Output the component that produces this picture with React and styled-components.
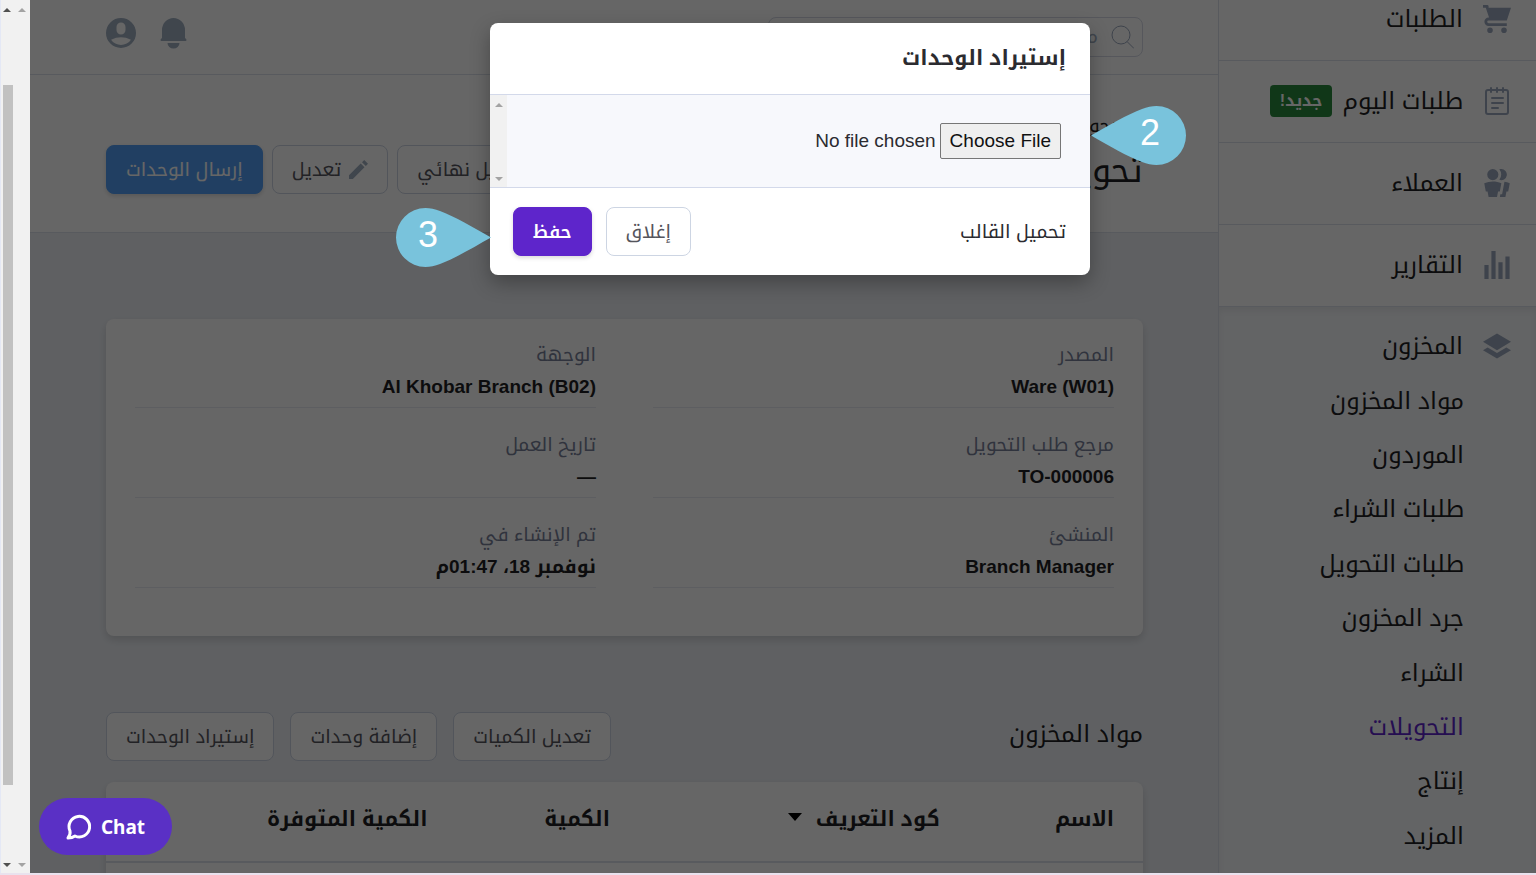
import React from "react"
import styled, { createGlobalStyle } from "styled-components"

const GlobalStyle = createGlobalStyle`
  * {
    box-sizing: border-box;
  }
  body {
    margin: 0;
    overflow: hidden;
    background: #fff;
    color: #1f1f24;
    font-family: "Liberation Sans", "Noto Kufi Arabic", "Noto Sans Arabic", "Noto Sans", "DejaVu Sans", sans-serif;
    font-size: 19px;
  }
  button, input {
    font-family: inherit;
    font-size: inherit;
  }
  a {
    color: inherit;
    text-decoration: none;
  }
`

const Shell = styled.div`
  display: flex;
  height: 100vh;
  border-bottom: 2px solid #e9e2ee;
`
const ScrollTrack = styled.div`
  flex: none;
  width: ${(p) => p.$width}px;
  display: flex;
  flex-direction: column;
  align-items: center;
  justify-content: space-between;
  background: #f1f1f1;
  padding: 8px 0 6px;
`
const PageTrack = styled(ScrollTrack)`
  border-left: 1px solid #e4e8f5;
`
const ScrollArrow = styled.span`
  width: 0;
  height: 0;
  border: 4px solid transparent;
  border-top: ${(p) => (p.$down ? `4px solid ${p.$color}` : "0")};
  border-bottom: ${(p) => (p.$down ? "0" : `4px solid ${p.$color}`)};
`
const ScrollThumb = styled.div`
  flex: 1;
  align-self: stretch;
  margin: 73px 0 78px 2px;
  background: #c1c1c1;
`
const Page = styled.div`
  position: relative;
  flex: 1;
  min-width: 0;
  display: flex;
  direction: rtl;
  overflow: hidden;
`

// sidebar
const Sidebar = styled.nav`
  flex: none;
  width: 318px;
  display: flex;
  flex-direction: column;
  margin-top: -21px;
  border-left: 1px solid #dde1ec;
  background: #fff;
  font-size: 24px;
`
const NavItem = styled.a`
  display: flex;
  align-items: center;
  gap: 20px;
  height: 82px;
  padding: 0 25px 2px;
  border-bottom: 1px solid #dde1ec;
`
const NavIcon = styled.svg`
  flex: none;
  width: 28px;
  height: 28px;
  fill: #9ba8bd;
`
const Badge = styled.span`
  margin-right: -10px;
  padding: 0 10px;
  border-radius: 4px;
  background: #288a3c;
  color: #fff;
  font-size: 16px;
  font-weight: bold;
  line-height: 32px;
`
const SubNav = styled.div`
  flex: 1;
  display: flex;
  flex-direction: column;
  padding: 12px 0 10px;
  background: #f7f9fc;
  box-shadow: inset 0 4px 6px rgba(0, 0, 0, 0.06);
`
const SubItem = styled.a`
  flex: 1;
  display: flex;
  align-items: center;
  gap: 20px;
  padding: 0 ${(p) => (p.$head ? 25 : 72)}px;
  color: ${(p) => (p.$active ? "#5e25cb" : "inherit")};
`

// main column
const Main = styled.main`
  flex: 1;
  min-width: 0;
  background: #eef1f6;
`
const TopBar = styled.header`
  display: flex;
  align-items: center;
  justify-content: space-between;
  height: 75px;
  padding: 0 75px 0 76px;
  border-bottom: 1px solid #dde1ec;
  background: #fff;
`
const SearchBox = styled.label`
  display: flex;
  align-items: center;
  gap: 10px;
  width: 375px;
  height: 40px;
  padding: 0 8px;
  border: 1px solid #d6dae6;
  border-radius: 8px;
`
const SearchInput = styled.input`
  flex: 1;
  min-width: 0;
  border: 0;
  outline: 0;
  background: none;
  &::placeholder {
    color: #a0aec0;
  }
`
const TopIcons = styled.div`
  display: flex;
  align-items: center;
  gap: 23px;
  padding-bottom: 8px;
`
const IconButton = styled.button`
  display: flex;
  padding: 0;
  border: 0;
  background: none;
`
const PageHead = styled.section`
  display: flex;
  align-items: flex-end;
  justify-content: space-between;
  height: 158px;
  padding: 0 75px 38px 76px;
  border-bottom: 1px solid #dde1ec;
  background: #fff;
`
const BackLink = styled.a`
  display: flex;
  align-items: center;
  gap: 20px;
  margin-bottom: 6px;
  line-height: 28px;
`
const Title = styled.h1`
  margin: 0;
  font-size: 34px;
  font-weight: normal;
  line-height: 48px;
`
const ButtonRow = styled.div`
  display: flex;
  gap: ${(p) => p.$gap}px;
`
const Button = styled.button`
  display: flex;
  align-items: center;
  justify-content: center;
  gap: 8px;
  height: 49px;
  padding: 0 19px;
  border: 1px solid ${(p) => (p.$fill ? p.$fill : "#cdd5e3")};
  border-radius: 8px;
  background: ${(p) => p.$fill || "#fff"};
  color: ${(p) => (p.$fill ? "#fff" : "#55555c")};
  white-space: nowrap;
  box-shadow: ${(p) => (p.$fill ? "0 2px 4px rgba(0, 0, 0, 0.15)" : "none")};
`
const SaveButton = styled(Button)`
  font-size: 18px;
  font-weight: 600;
`
const Content = styled.div`
  padding: 86px 75px 0 76px;
`
const Card = styled.section`
  border-radius: 8px;
  background: #fff;
  box-shadow: 0 4px 8px rgba(0, 0, 0, 0.14);
`
const Details = styled.dl`
  display: grid;
  grid-template-columns: 1fr 1fr;
  gap: 21px 57px;
  margin: 0;
  padding: 20px 29px 48px;
`
const Detail = styled.div`
  padding-bottom: 4px;
  border-bottom: 1px solid #e8ebf2;
  line-height: 32px;
  dt {
    color: #78819a;
  }
  dd {
    margin: 0;
    font-weight: bold;
  }
`
const SectionHead = styled.div`
  display: flex;
  align-items: center;
  justify-content: space-between;
  padding: 75px 0 20px;
`
const SectionTitle = styled.h2`
  margin: 0;
  padding-bottom: 5px;
  font-size: 24px;
  font-weight: normal;
`
const Table = styled.table`
  width: 100%;
  table-layout: fixed;
  border-collapse: collapse;
  th {
    height: 80px;
    padding: 0 29px 5px;
    border-bottom: 2px solid #dde1ec;
    font-size: 21px;
    text-align: right;
    white-space: nowrap;
  }
  td {
    height: 80px;
  }
`
const Col = styled.col`
  width: ${(p) => p.$width};
`
const SortIcon = styled.svg`
  width: 14px;
  height: 8px;
  margin-right: 14px;
  vertical-align: 5px;
`

// modal
const Backdrop = styled.div`
  position: absolute;
  inset: 0;
  display: flex;
  align-items: flex-start;
  justify-content: center;
  padding: 23px 0 0 14px;
  background: rgba(0, 0, 0, 0.6);
`
const Modal = styled.div`
  width: 600px;
  border-radius: 8px;
  overflow: hidden;
  background: #fff;
  color: #2b2b30;
  box-shadow: 0 8px 20px rgba(0, 0, 0, 0.3);
`
const ModalTitle = styled.h3`
  margin: 0;
  padding: 0 24px 2px;
  font-size: 21px;
  line-height: 69px;
`
const ModalBody = styled.div`
  display: flex;
  justify-content: space-between;
  height: 94px;
  border: solid #d3d9ea;
  border-width: 1px 0;
  background: #f7f8fc;
`
const FileField = styled.label`
  padding: 28px 29px;
`
const FileInput = styled.input`
  width: 280px;
  &::file-selector-button {
    height: 36px;
    padding: 0 9px;
    border: 1px solid #767676;
    border-radius: 2px;
    background: #efefef;
    color: #111;
    font-family: inherit;
    font-size: 19px;
  }
`
const ModalFoot = styled.div`
  display: flex;
  align-items: center;
  justify-content: space-between;
  height: 87px;
  padding: 0 24px 0 23px;
`

// numbered pointers and chat, both float over the page
const Pin = styled.div`
  position: absolute;
  left: ${(p) => p.$x}px;
  top: ${(p) => p.$y}px;
  width: 95px;
  height: 59px;
  direction: ltr;
  color: #fff;
  font-size: 36px;
  line-height: 54px;
  svg {
    position: absolute;
    inset: 0;
    transform: ${(p) => (p.$flip ? "scaleX(-1)" : "none")};
  }
  span {
    position: relative;
    display: block;
    padding: ${(p) => (p.$flip ? "0 0 0 49px" : "0 0 0 22px")};
  }
`
const ChatButton = styled.button`
  position: absolute;
  left: 9px;
  bottom: 18px;
  display: flex;
  align-items: center;
  justify-content: center;
  gap: 9px;
  width: 133px;
  height: 57px;
  border: 0;
  border-radius: 29px;
  background: #5a30c5;
  color: #fff;
  direction: ltr;
  font-family: "Noto Sans", sans-serif;
  font-size: 19px;
  font-weight: bold;
`

const cartPath = "M4 2h16l-3 9H4a1 1 0 1 0 0 2h13v2H4a3 3 0 0 1 0-6h.33L3 5 2 2H0V0h3a1 1 0 0 1 1 1v1zm1 18a2 2 0 1 1 0-4 2 2 0 0 1 0 4zm10 0a2 2 0 1 1 0-4 2 2 0 0 1 0 4z"
const usersPath = "M7 8a4 4 0 1 1 0-8 4 4 0 0 1 0 8zm0 1c2.15 0 4.2.4 6.1 1.09L12 16h-1.25L10 20H4l-.75-4H2L.9 10.09A17.93 17.93 0 0 1 7 9zm8.31.17c1.32.18 2.59.48 3.8.92L18 16h-1.25L16 20h-3.96l.37-2h1.25l1.65-8.83zM13 0a4 4 0 1 1-1.33 7.76 5.96 5.96 0 0 0 0-7.52C12.1.1 12.53 0 13 0z"
const chartPath = "M1 10h3v10H1V10zM6 0h3v20H6V0zm5 8h3v12h-3V8zm5-4h3v16h-3V4z"
const layersPath = "M10 1l10 6-10 6L0 7l10-6zm6.67 10L20 13l-10 6-10-6 3.33-2L10 15l6.67-4z"
const userPath = "M10 20a10 10 0 1 1 0-20 10 10 0 0 1 0 20zM7 6v2a3 3 0 1 0 6 0V6a3 3 0 1 0-6 0zm-3.65 8.44a8 8 0 0 0 13.3 0 15.94 15.94 0 0 0-13.3 0z"
const pencilPath = "M12.3 3.7l4 4L4 20H0v-4L12.3 3.7zm1.4-1.4L16 0l4 4-2.3 2.3-4-4z"

const subItems = ["مواد المخزون", "الموردون", "طلبات الشراء", "طلبات التحويل", "جرد المخزون", "الشراء", "التحويلات", "إنتاج", "المزيد"]

const details = [
    ["المصدر", "Ware (W01)"],
    ["الوجهة", "Al Khobar Branch (B02)"],
    ["مرجع طلب التحويل", "TO-000006"],
    ["تاريخ العمل", "—"],
    ["المنشئ", "Branch Manager"],
    ["تم الإنشاء في", "نوفمبر 18، 01:47م"],
]

const SolidIcon = ({ path }) => (
    <NavIcon viewBox="0 0 20 20" aria-hidden="true"><path d={path} /></NavIcon>
)

const NotepadIcon = () => (
    <NavIcon viewBox="0 0 28 28" aria-hidden="true">
        <g fill="none" stroke="#9ba8bd" strokeWidth="2" strokeLinecap="round">
            <rect x="3" y="3" width="22" height="24" rx="2" />
            <path d="M8 1v4M14 1v4M20 1v4M9 11h11M9 16h11M9 21h6" />
        </g>
    </NavIcon>
)

const Pointer = ({ x, y, flip, children }) => (
    <Pin $x={x} $y={y} $flip={flip}>
        <svg width="95" height="59" viewBox="0 0 95 59" aria-hidden="true">
            <path fill="#79c3dc" d="M95 29.5C78 20 58 8 44 3C39 1 34 0 29.5 0A29.5 29.5 0 0 0 29.5 59C34 59 39 58 44 56C58 51 78 39 95 29.5z" />
        </svg>
        <span>{children}</span>
    </Pin>
)

const App = () => {
    return (
        <>
            <GlobalStyle />
            <Shell>
                <PageTrack $width={13}>
                    <ScrollArrow $color="#505050" />
                    <ScrollThumb />
                    <ScrollArrow $down $color="#505050" />
                </PageTrack>
                <ScrollTrack $width={17}>
                    <ScrollArrow $color="#a3a3a3" />
                    <ScrollArrow $down $color="#a3a3a3" />
                </ScrollTrack>
                <Page>
                    <Sidebar>
                        <NavItem href="#orders"><SolidIcon path={cartPath} />الطلبات</NavItem>
                        <NavItem href="#today"><NotepadIcon />طلبات اليوم<Badge>جديد!</Badge></NavItem>
                        <NavItem href="#customers"><SolidIcon path={usersPath} />العملاء</NavItem>
                        <NavItem href="#reports"><SolidIcon path={chartPath} />التقارير</NavItem>
                        <SubNav>
                            <SubItem $head href="#inventory"><SolidIcon path={layersPath} />المخزون</SubItem>
                            {subItems.map((item) => (
                                <SubItem key={item} href="#inventory" $active={item === "التحويلات"}>{item}</SubItem>
                            ))}
                        </SubNav>
                    </Sidebar>

                    <Main>
                        <TopBar>
                            <SearchBox>
                                <svg width="24" height="24" viewBox="0 0 24 24" fill="none" stroke="#9ba8bd" strokeWidth="1" aria-hidden="true">
                                    <circle cx="11" cy="10" r="9" />
                                    <path d="M17 16.500l7 7" />
                                </svg>
                                <SearchInput type="text" aria-label="بحث" placeholder="ما الذي تبحث عنه؟" />
                            </SearchBox>
                            <TopIcons>
                                <IconButton aria-label="الإشعارات">
                                    <svg width="30" height="32" viewBox="0 0 30 32" fill="#a0aec0" aria-hidden="true">
                                        <path d="M3 21V13A11.500 12 0 0 1 26 13V21Q27.500 22 27.500 23T26.500 24H2.500Q1.500 24 1.500 23T3 21zM8.500 26h12a6 5.500 0 0 1-12 0z" />
                                    </svg>
                                </IconButton>
                                <IconButton aria-label="الحساب">
                                    <svg width="30" height="30" viewBox="0 0 20 20" fill="#a0aec0" aria-hidden="true"><path d={userPath} /></svg>
                                </IconButton>
                            </TopIcons>
                        </TopBar>

                        <PageHead>
                            <div>
                                <BackLink href="#back"><span>›</span>رجوع</BackLink>
                                <Title>تحويل</Title>
                            </div>
                            <ButtonRow $gap={9}>
                                <Button>تعديل نهائي</Button>
                                <Button>
                                    <svg width="19" height="19" viewBox="0 0 20 20" fill="#a0aec0" aria-hidden="true"><path d={pencilPath} /></svg>
                                    تعديل
                                </Button>
                                <Button $fill="#549ff5">إرسال الوحدات</Button>
                            </ButtonRow>
                        </PageHead>

                        <Content>
                            <Card>
                                <Details>
                                    {details.map(([label, value]) => (
                                        <Detail key={label}>
                                            <dt>{label}</dt>
                                            <dd>{value}</dd>
                                        </Detail>
                                    ))}
                                </Details>
                            </Card>
                            <SectionHead>
                                <SectionTitle>مواد المخزون</SectionTitle>
                                <ButtonRow $gap={16}>
                                    <Button>تعديل الكميات</Button>
                                    <Button>إضافة وحدات</Button>
                                    <Button>إستيراد الوحدات</Button>
                                </ButtonRow>
                            </SectionHead>
                            <Card>
                                <Table>
                                    <colgroup>
                                        <Col $width="16.8%" />
                                        <Col $width="31.8%" />
                                        <Col $width="17.6%" />
                                        <Col $width="auto" />
                                    </colgroup>
                                    <thead>
                                        <tr>
                                            <th>الاسم</th>
                                            <th>
                                                كود التعريف
                                                <SortIcon viewBox="0 0 14 8" aria-hidden="true"><path d="M0 0h14L7 8z" /></SortIcon>
                                            </th>
                                            <th>الكمية</th>
                                            <th>الكمية المتوفرة</th>
                                        </tr>
                                    </thead>
                                    <tbody>
                                        <tr><td colSpan={4} /></tr>
                                    </tbody>
                                </Table>
                            </Card>
                        </Content>
                    </Main>

                    <Backdrop>
                        <Modal role="dialog" aria-labelledby="import-title">
                            <ModalTitle id="import-title">إستيراد الوحدات</ModalTitle>
                            <ModalBody>
                                <FileField>
                                    <FileInput type="file" aria-label="ملف الوحدات" />
                                </FileField>
                                <ScrollTrack $width={17}>
                                    <ScrollArrow $color="#a3a3a3" />
                                    <ScrollArrow $down $color="#a3a3a3" />
                                </ScrollTrack>
                            </ModalBody>
                            <ModalFoot>
                                <a href="#template">تحميل القالب</a>
                                <ButtonRow $gap={14}>
                                    <Button>إغلاق</Button>
                                    <SaveButton $fill="#5e25cb">حفظ</SaveButton>
                                </ButtonRow>
                            </ModalFoot>
                        </Modal>
                    </Backdrop>

                    <Pointer x={1061} y={106} flip>2</Pointer>
                    <Pointer x={366} y={208}>3</Pointer>
                    <ChatButton>
                        <svg width="26" height="26" viewBox="0 0 26 26" fill="none" stroke="#fff" strokeWidth="3" strokeLinejoin="round" aria-hidden="true">
                            <path d="M4 17A10.300 10.300 0 1 1 9 22C7 23.500 4.500 24 2 24C3.500 22 4.500 19.500 4 17z" />
                        </svg>
                        Chat
                    </ChatButton>
                </Page>
            </Shell>
        </>
    )
}

export default App
